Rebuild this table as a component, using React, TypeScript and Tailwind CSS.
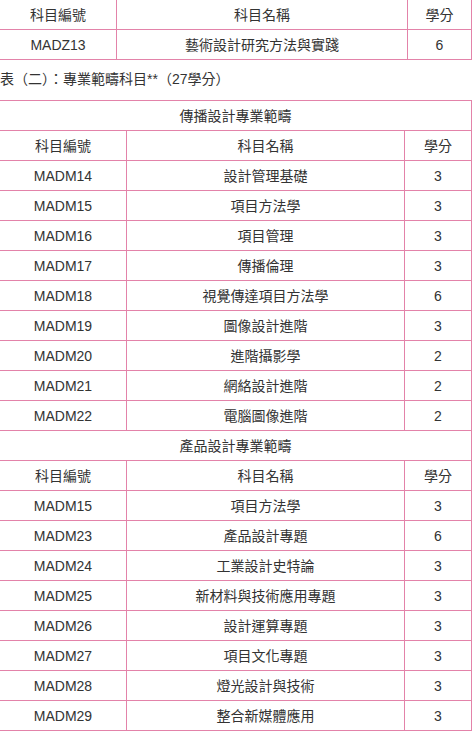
import React from "react";

type Row = [string, string, string];

const cell = "border border-[#e383a9] text-center align-middle p-0";

const commRows: Row[] = [
  ["MADM14", "設計管理基礎", "3"],
  ["MADM15", "項目方法學", "3"],
  ["MADM16", "項目管理", "3"],
  ["MADM17", "傳播倫理", "3"],
  ["MADM18", "視覺傳達項目方法學", "6"],
  ["MADM19", "圖像設計進階", "3"],
  ["MADM20", "進階攝影學", "2"],
  ["MADM21", "網絡設計進階", "2"],
  ["MADM22", "電腦圖像進階", "2"],
];

const prodRows: Row[] = [
  ["MADM15", "項目方法學", "3"],
  ["MADM23", "產品設計專題", "6"],
  ["MADM24", "工業設計史特論", "3"],
  ["MADM25", "新材料與技術應用專題", "3"],
  ["MADM26", "設計運算專題", "3"],
  ["MADM27", "項目文化專題", "3"],
  ["MADM28", "燈光設計與技術", "3"],
  ["MADM29", "整合新媒體應用", "3"],
];

function HeadRow() {
  return (
    <tr className="h-[30px]">
      <td className={cell}>科目編號</td>
      <td className={cell}>科目名稱</td>
      <td className={cell}>學分</td>
    </tr>
  );
}

function Section({ title, rows }: { title: string; rows: Row[] }) {
  return (
    <>
      <tr className="h-[30px]">
        <td colSpan={3} className={cell}>
          {title}
        </td>
      </tr>
      <HeadRow />
      {rows.map((r, i) => (
        <tr key={i} className="h-[30px]">
          <td className={cell}>{r[0]}</td>
          <td className={cell}>{r[1]}</td>
          <td className={cell}>{r[2]}</td>
        </tr>
      ))}
    </>
  );
}

export default function App() {
  return (
    <div
      className="bg-white text-[14px] leading-[20px] text-[#333] overflow-hidden w-[473px]"
      style={{ fontFamily: '"Liberation Sans", Arial, "Noto Sans CJK TC", sans-serif' }}
    >
      <table className="border-collapse table-fixed w-[472px] -ml-px -mt-px">
        <colgroup>
          <col className="w-[117px]" />
          <col className="w-[291px]" />
          <col className="w-[64px]" />
        </colgroup>
        <tbody>
          <HeadRow />
          <tr className="h-[30px]">
            <td className={cell}>MADZ13</td>
            <td className={cell}>藝術設計研究方法與實踐</td>
            <td className={cell}>6</td>
          </tr>
        </tbody>
      </table>

      <p className="mt-[9px] mb-[11px] h-[20px]">表（二）：專業範疇科目**（27學分）</p>

      <table className="border-collapse table-fixed w-[472px] -ml-px">
        <colgroup>
          <col className="w-[127px]" />
          <col className="w-[278px]" />
          <col className="w-[67px]" />
        </colgroup>
        <tbody>
          <Section title="傳播設計專業範疇" rows={commRows} />
          <Section title="產品設計專業範疇" rows={prodRows} />
        </tbody>
      </table>
    </div>
  );
}
